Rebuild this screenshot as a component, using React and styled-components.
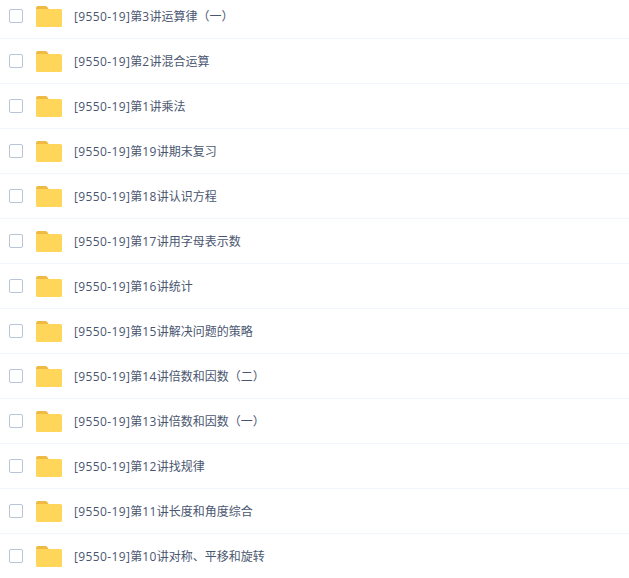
import React from 'react'
import styled, { createGlobalStyle } from 'styled-components'

const GlobalStyle = createGlobalStyle`
  html, body {
    margin: 0;
    padding: 0;
    background: #fff;
    overflow: hidden;
  }
`

const List = styled.ul`
  list-style: none;
  margin: -6px 0 0;
  padding: 0;
  font-family: 'Open Sans', 'Noto Sans CJK SC', sans-serif;
  font-size: 12px;
  color: #4a5670;
`

const Row = styled.li`
  display: flex;
  align-items: center;
  height: 44px;
  padding-left: 9px;
  border-bottom: 1px solid #f2f6fd;
`

const Check = styled.span`
  flex: none;
  box-sizing: border-box;
  width: 14px;
  height: 14px;
  border: 1px solid #b9c4d6;
  border-radius: 2px;
  background: #fff;
`

const FolderIcon = styled.svg`
  flex: none;
  width: 26px;
  height: 21px;
  margin: 1px 0 0 13px;
`

const Name = styled.span`
  margin-left: 12px;
  white-space: nowrap;
`

const Latin = styled.span`
  letter-spacing: 0.38px;
`

const Folder = () => (
  <FolderIcon viewBox="0 0 26 21">
    <path d="M0 2a2 2 0 0 1 2-2h7.500a2 2 0 0 1 1.600.8L13 3.500H0z" fill="#eeba44" />
    <path d="M1.500 3h23A1.500 1.500 0 0 1 26 4.500V19.500a1.500 1.500 0 0 1-1.500 1.500h-23A1.500 1.500 0 0 1 0 19.500V4.500A1.500 1.500 0 0 1 1.500 3z" fill="#ffd659" />
  </FolderIcon>
)

const items = [
  [3, '运算律（一）'],
  [2, '混合运算'],
  [1, '乘法'],
  [19, '期末复习'],
  [18, '认识方程'],
  [17, '用字母表示数'],
  [16, '统计'],
  [15, '解决问题的策略'],
  [14, '倍数和因数（二）'],
  [13, '倍数和因数（一）'],
  [12, '找规律'],
  [11, '长度和角度综合'],
  [10, '对称、平移和旋转'],
]

export default function App() {
  return (
    <>
      <GlobalStyle />
      <List>
        {items.map(([num, title]) => (
          <Row key={num}>
            <Check />
            <Folder />
            <Name>
              <Latin>[9550-19]</Latin>第<Latin>{num}</Latin>讲{title}
            </Name>
          </Row>
        ))}
      </List>
    </>
  )
}
